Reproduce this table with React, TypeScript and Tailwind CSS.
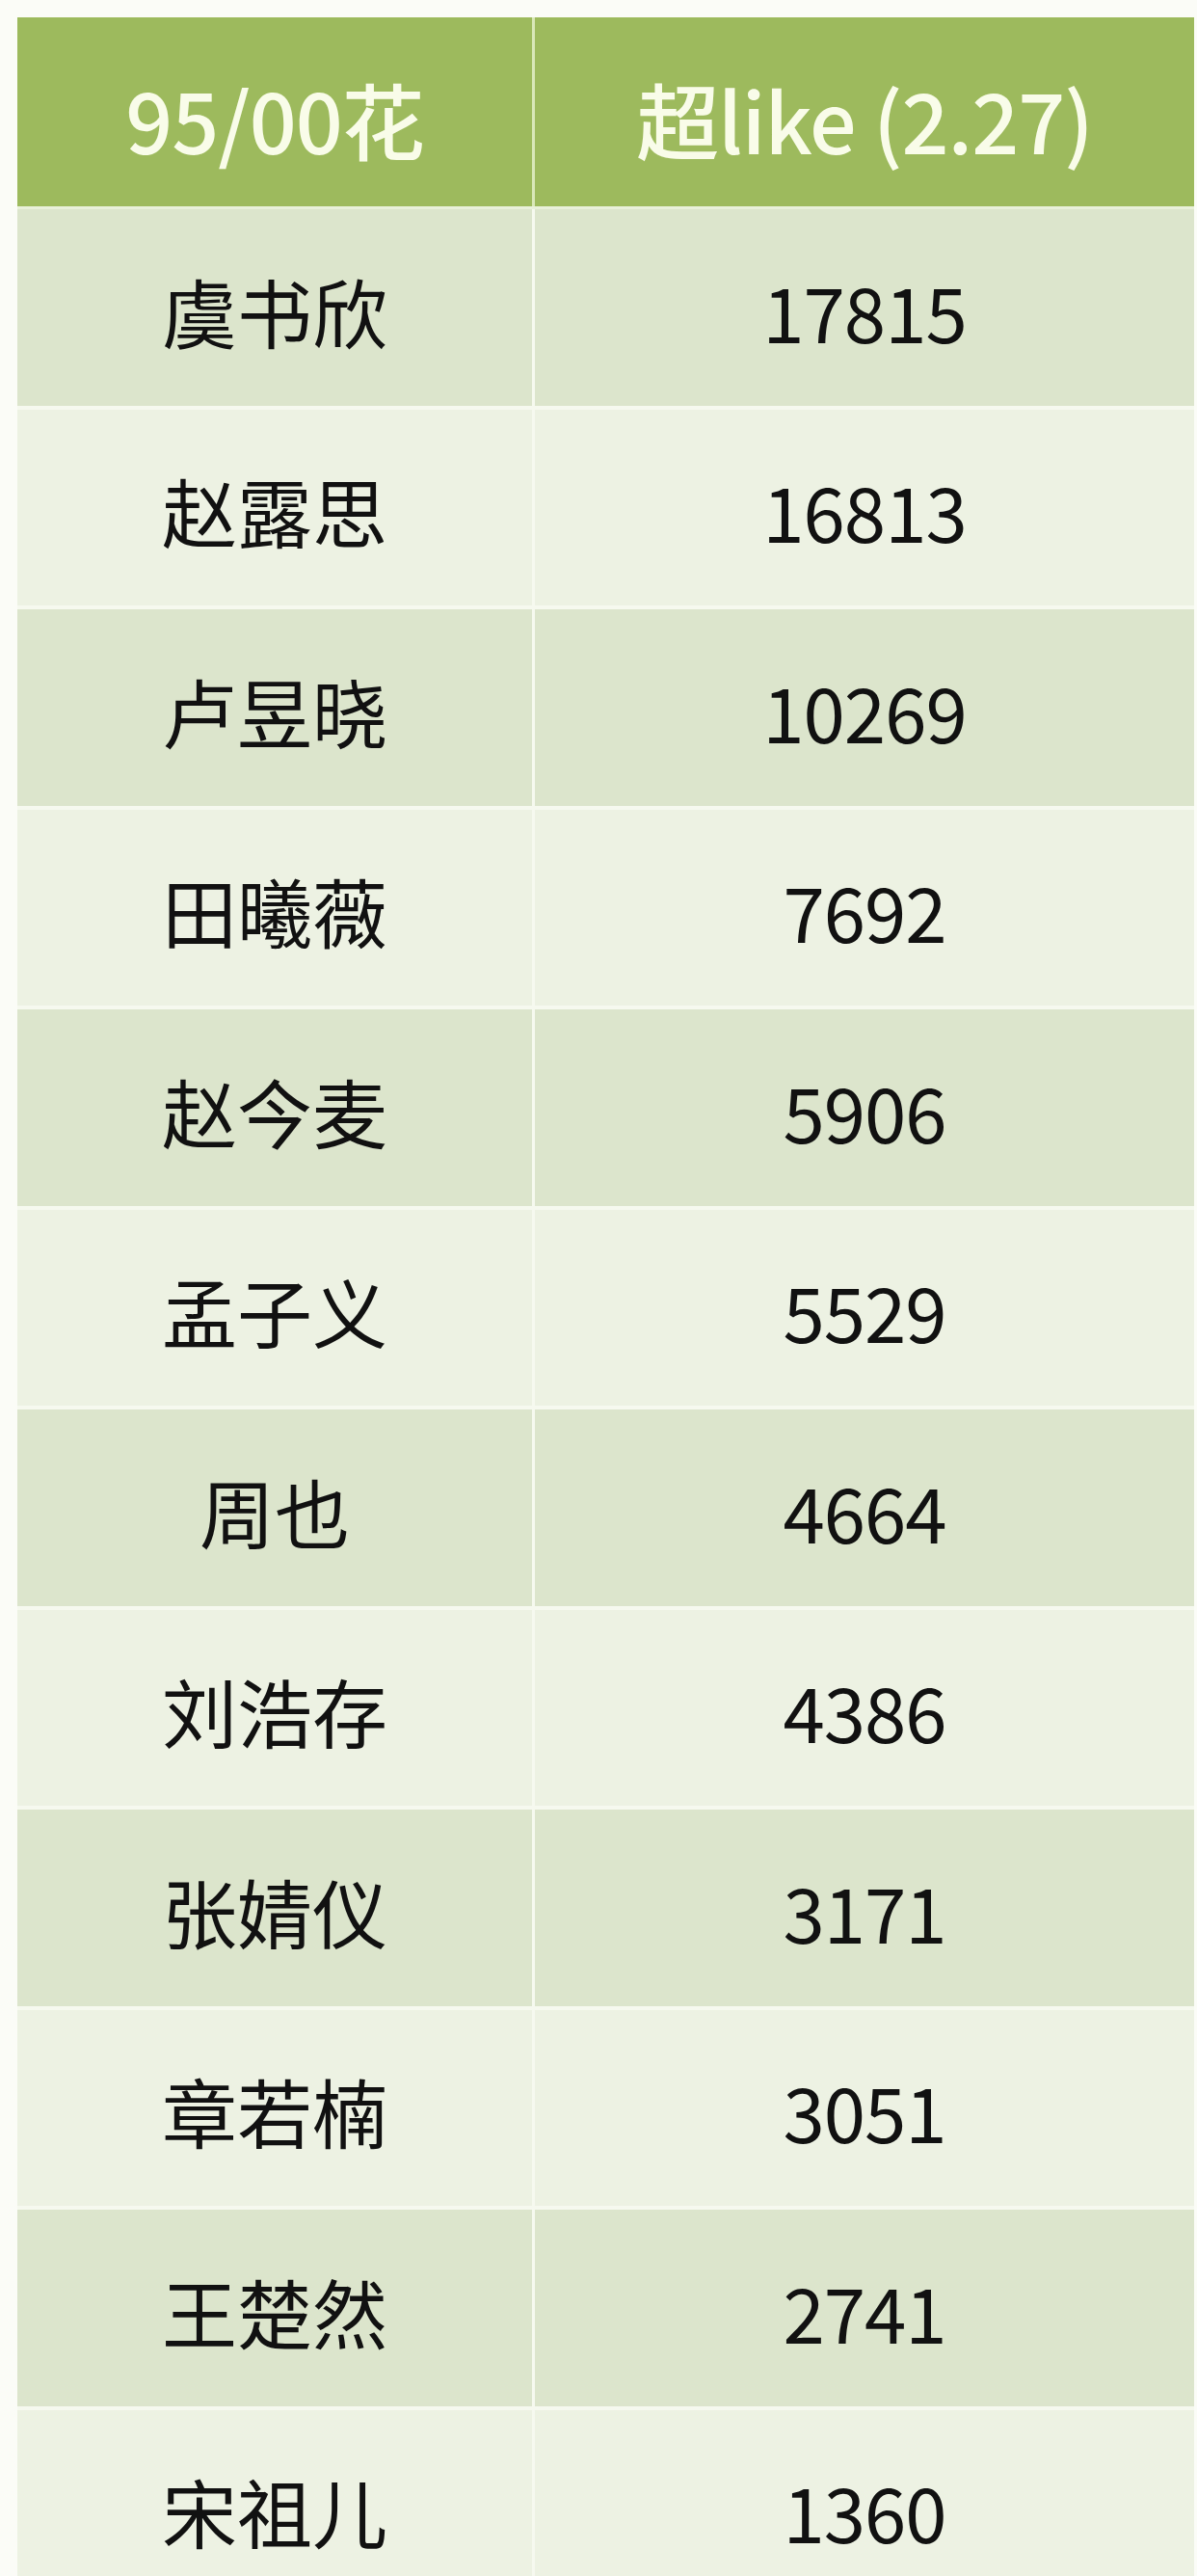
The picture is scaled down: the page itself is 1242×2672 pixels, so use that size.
import React from "react";

const rows: [string, string][] = [
  ["虞书欣", "17815"],
  ["赵露思", "16813"],
  ["卢昱晓", "10269"],
  ["田曦薇", "7692"],
  ["赵今麦", "5906"],
  ["孟子义", "5529"],
  ["周也", "4664"],
  ["刘浩存", "4386"],
  ["张婧仪", "3171"],
  ["章若楠", "3051"],
  ["王楚然", "2741"],
  ["宋祖儿", "1360"],
];

export default function App() {
  return (
    <div
      className="w-[1242px] h-[2672px] overflow-hidden bg-[#fbfcf7] pt-[18px] pl-[18px] pr-[3px]"
      style={{ fontFamily: '"Noto Sans CJK SC", "Noto Sans", sans-serif' }}
    >
      <div className="flex flex-col">
        <div className="flex h-[199px] bg-[#9dba5d] border-b-[3px] border-[#e9f1da]">
          <div className="w-[537px] flex items-center justify-center border-r-[3px] border-[#d9e8b8] text-[86px] font-medium text-[#f9fce9] leading-none pt-[14px] tracking-[-1px]">
            95/00花
          </div>
          <div className="flex-1 flex items-center justify-center text-[86px] font-medium text-[#f9fce9] leading-none pt-[14px] tracking-[-1px]">
            超like (2.27)
          </div>
        </div>
        {rows.map(([name, val], i) => (
          <div
            key={name}
            className={`flex h-[207.5px] shrink-0 border-b-[4px] border-[#f6f9ef] ${
              i % 2 === 0 ? "bg-[#dce5cc]" : "bg-[#edf2e3]"
            }`}
          >
            <div className="w-[537px] flex items-center justify-center border-r-[3px] border-[#f6f9ef] text-[78px] text-[#111111] leading-none pt-[6px]">
              {name}
            </div>
            <div className="flex-1 flex items-center justify-center text-[78px] text-[#111111] leading-none pt-[6px] tracking-[-1px]">
              {val}
            </div>
          </div>
        ))}
      </div>
    </div>
  );
}
